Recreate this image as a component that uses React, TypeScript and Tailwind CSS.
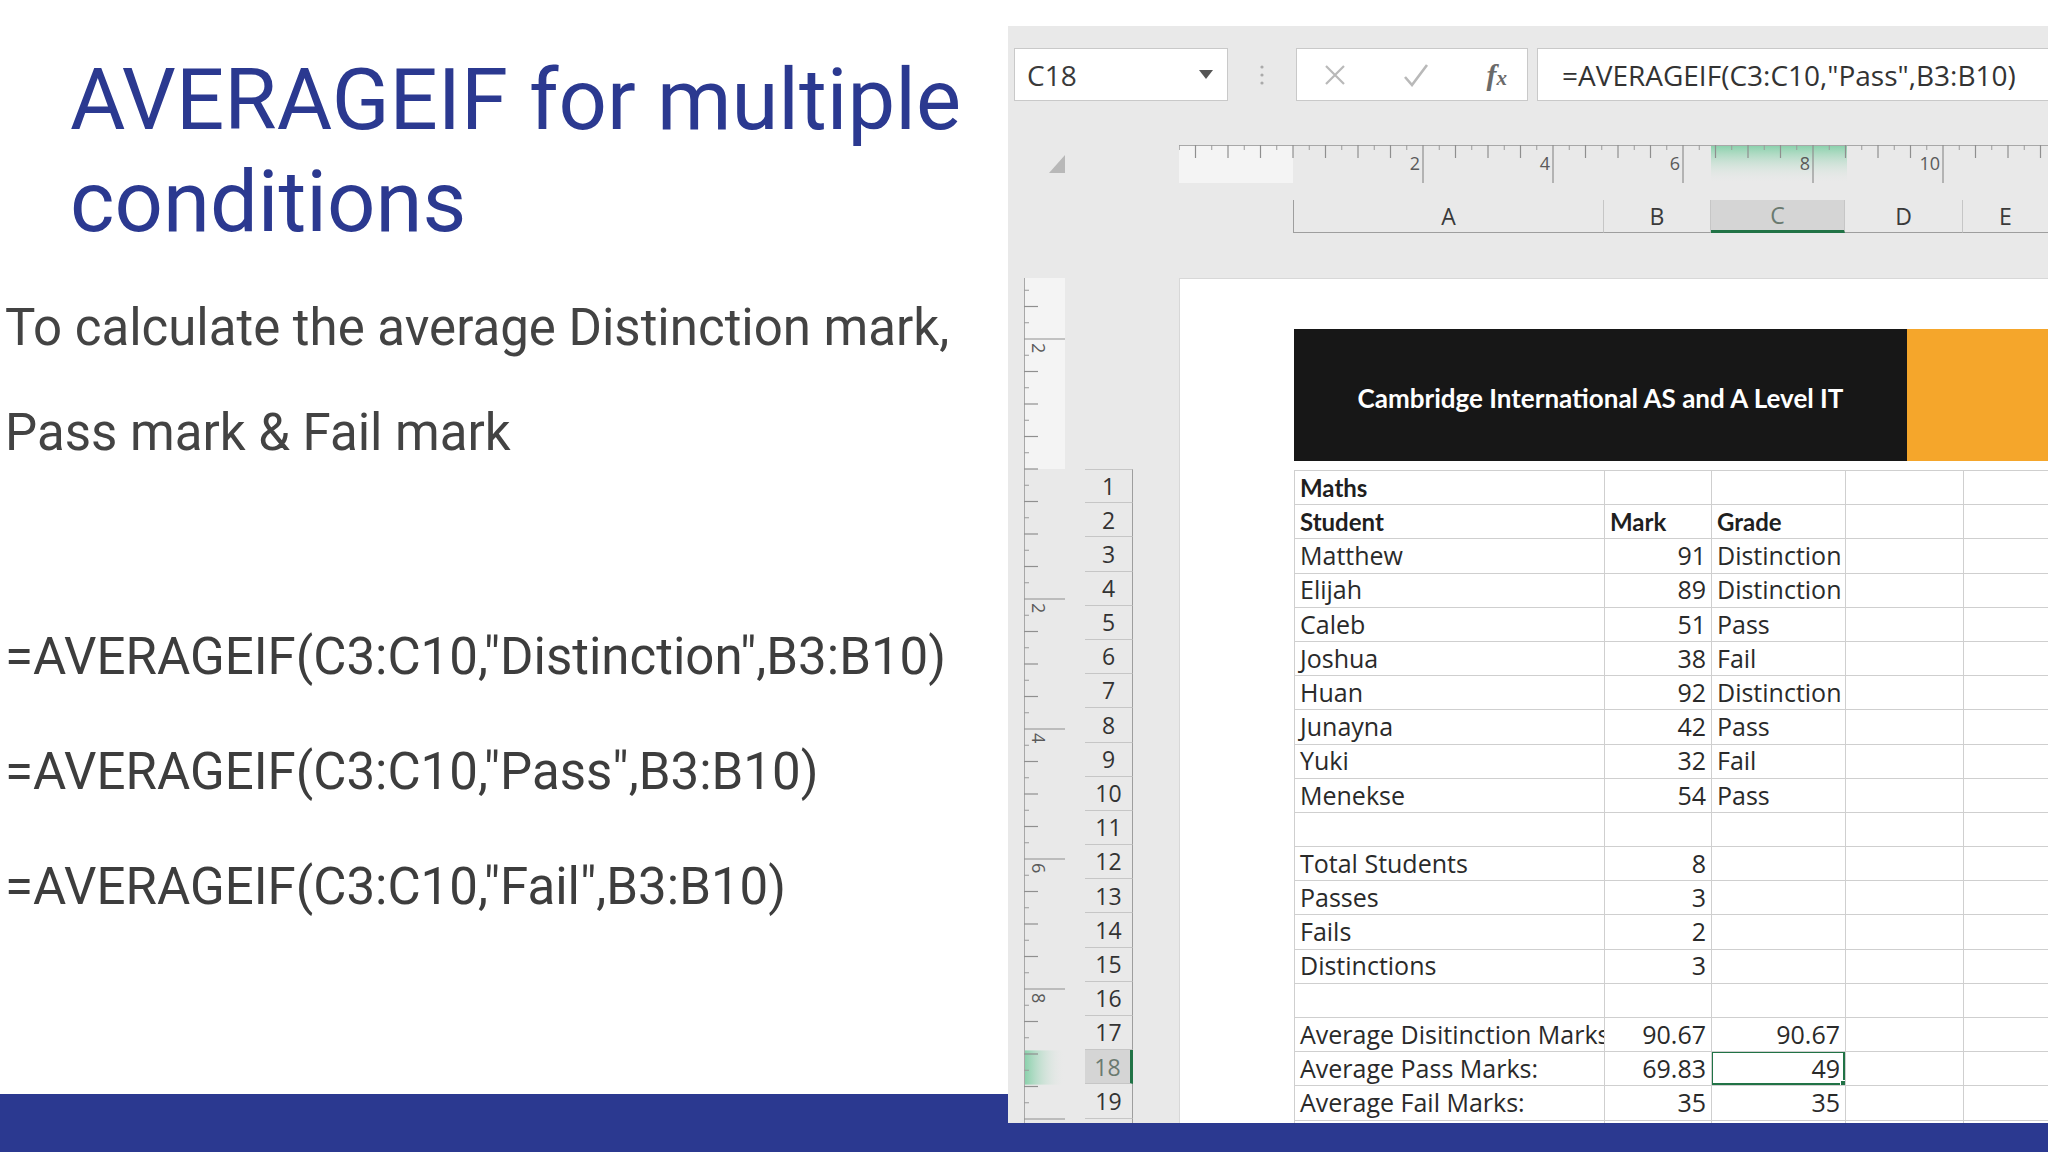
import React from "react";

type Row = { a?: string; b?: string; c?: string; bold?: boolean; selected?: boolean };

const rows: Row[] = [
  { a: "Maths", bold: true },
  { a: "Student", b: "Mark", c: "Grade", bold: true },
  { a: "Matthew", b: "91", c: "Distinction" },
  { a: "Elijah", b: "89", c: "Distinction" },
  { a: "Caleb", b: "51", c: "Pass" },
  { a: "Joshua", b: "38", c: "Fail" },
  { a: "Huan", b: "92", c: "Distinction" },
  { a: "Junayna", b: "42", c: "Pass" },
  { a: "Yuki", b: "32", c: "Fail" },
  { a: "Menekse", b: "54", c: "Pass" },
  {},
  { a: "Total Students", b: "8" },
  { a: "Passes", b: "3" },
  { a: "Fails", b: "2" },
  { a: "Distinctions", b: "3" },
  {},
  { a: "Average Disitinction Marks", b: "90.67", c: "90.67" },
  { a: "Average Pass Marks:", b: "69.83", c: "49", selected: true },
  { a: "Average Fail Marks:", b: "35", c: "35" },
  {},
];

const isNum = (s?: string) => !!s && /^[\d.]+$/.test(s);

function HRuler() {
  const w = 869;
  const x0 = 114;
  const q = 16.25;
  const ticks: React.ReactNode[] = [];
  for (let k = -7; x0 + k * q < w; k++) {
    const x = x0 + k * q;
    if (k % 8 === 0 && k > 0) {
      ticks.push(<line key={k} x1={x} y1={0} x2={x} y2={38} stroke="#8f8f8f" strokeWidth={1.2} />);
      ticks.push(
        <text key={"t" + k} x={x - 3} y={25} fontSize={18} fill="#5a5a5a" textAnchor="end" fontFamily="Open Sans, sans-serif">
          {k / 4}
        </text>
      );
    } else if (k % 2 === 0) {
      ticks.push(<line key={k} x1={x} y1={0} x2={x} y2={13} stroke="#8f8f8f" strokeWidth={1.2} />);
    } else {
      ticks.push(<line key={k} x1={x} y1={0} x2={x} y2={5} stroke="#9a9a9a" strokeWidth={1} />);
    }
  }
  return (
    <svg width={w} height={38} className="block">
      <defs>
        <linearGradient id="hg" x1="0" y1="0" x2="0" y2="1">
          <stop offset="0" stopColor="#86d0a9" />
          <stop offset="1" stopColor="#e9e9e9" stopOpacity="0" />
        </linearGradient>
      </defs>
      <rect x={0} y={0} width={x0} height={38} fill="#f4f4f4" />
      <rect x={532} y={0} width={136} height={38} fill="url(#hg)" />
      <line x1={0} y1={0.5} x2={w} y2={0.5} stroke="#a8a8a8" />
      {ticks}
    </svg>
  );
}

function VRuler() {
  const h = 845;
  const y0 = 191;
  const q = 16.25;
  const ticks: React.ReactNode[] = [];
  for (let k = -11; y0 + k * q < h; k++) {
    const y = y0 + k * q;
    if (k % 8 === 0 && k !== 0) {
      ticks.push(<line key={k} x1={0} y1={y} x2={41} y2={y} stroke="#8f8f8f" strokeWidth={1.2} />);
      if (y + 30 < h) {
        ticks.push(
          <text key={"t" + k} x={0} y={0} transform={`translate(8 ${y + 4}) rotate(90)`} fontSize={18} fill="#5a5a5a" fontFamily="Open Sans, sans-serif">
            {Math.abs(k) / 4}
          </text>
        );
      }
    } else if (k % 2 === 0) {
      ticks.push(<line key={k} x1={0} y1={y} x2={14} y2={y} stroke="#8f8f8f" strokeWidth={1.2} />);
    } else {
      ticks.push(<line key={k} x1={0} y1={y} x2={5} y2={y} stroke="#9a9a9a" strokeWidth={1} />);
    }
  }
  return (
    <svg width={41} height={h} className="block">
      <defs>
        <linearGradient id="vg" x1="0" y1="0" x2="1" y2="0">
          <stop offset="0" stopColor="#86d0a9" />
          <stop offset="1" stopColor="#e9e9e9" stopOpacity="0" />
        </linearGradient>
      </defs>
      <rect x={0} y={0} width={41} height={y0} fill="#f4f4f4" />
      <rect x={0} y={y0 + 17 * 34.2} width={41} height={34.2} fill="url(#vg)" />
      <line x1={0.5} y1={0} x2={0.5} y2={h} stroke="#a8a8a8" />
      {ticks}
    </svg>
  );
}

function Cell({ w, text, bold, right, children }: { w: string; text?: string; bold?: boolean; right?: boolean; children?: React.ReactNode }) {
  return (
    <div
      className={`${w} relative h-full shrink-0 border-r border-b border-[#cfcfcf] flex items-center overflow-hidden whitespace-nowrap px-[5px] ${right ? "justify-end" : "justify-start"}`}
    >
      {text && (
        <span
          className={bold ? "text-[24px] font-bold text-[#1f1f1f]" : "text-[25px] text-[#2a2a2a]"}
          style={{ fontFamily: bold ? "Lato, sans-serif" : '"Open Sans", sans-serif' }}
        >
          {text}
        </span>
      )}
      {children}
    </div>
  );
}

function Excel() {
  return (
    <div
      className="absolute left-[1008px] top-[26px] w-[1040px] h-[1097px] bg-[#e9e9e9] overflow-hidden flex flex-col"
      style={{ fontFamily: '"Open Sans", sans-serif' }}
    >
      {/* formula bar */}
      <div className="flex h-[53px] mt-[22px] pl-[6px] shrink-0">
        <div className="w-[214px] bg-white border border-[#c9c9c9] flex items-center justify-between pl-[12px] pr-[14px]">
          <span className="text-[28px] text-[#3a3a3a]">C18</span>
          <svg width="14" height="9" viewBox="0 0 14 9">
            <polygon points="0,0 14,0 7,9" fill="#555" />
          </svg>
        </div>
        <div className="w-[68px] flex items-center justify-center">
          <svg width="4" height="22" viewBox="0 0 4 22">
            <circle cx="2" cy="3" r="1.6" fill="#aaa" />
            <circle cx="2" cy="11" r="1.6" fill="#aaa" />
            <circle cx="2" cy="19" r="1.6" fill="#aaa" />
          </svg>
        </div>
        <div className="w-[232px] bg-white border border-[#c9c9c9] flex items-center justify-between pl-[27px] pr-[20px]">
          <svg width="22" height="22" viewBox="0 0 22 22">
            <path d="M2 2 L20 20 M20 2 L2 20" stroke="#b9b9b9" strokeWidth="2.2" />
          </svg>
          <svg width="26" height="24" viewBox="0 0 26 24">
            <path d="M2 14 L9 22 L24 2" stroke="#b9b9b9" strokeWidth="2.6" fill="none" />
          </svg>
          <span className="italic font-bold text-[30px] text-[#6a6a6a] leading-none" style={{ fontFamily: '"Liberation Serif", serif' }}>
            f<span className="text-[21px]">x</span>
          </span>
        </div>
        <div className="flex-1 ml-[9px] bg-white border border-r-0 border-[#c9c9c9] flex items-center pl-[24px] text-[28px] text-[#333] whitespace-nowrap">
          =AVERAGEIF(C3:C10,"Pass",B3:B10)
        </div>
      </div>

      {/* horizontal ruler */}
      <div className="flex h-[38px] mt-[44px] shrink-0">
        <div className="w-[171px] pl-[41px] pt-[10px]">
          <svg width="16" height="18" viewBox="0 0 16 18">
            <polygon points="16,0 16,18 0,18" fill="#b8b8b8" />
          </svg>
        </div>
        <HRuler />
      </div>

      {/* column headers */}
      <div className="flex h-[33px] mt-[17px] pl-[285px] shrink-0 text-[23px] text-[#3a3a3a]">
        <div className="w-[311px] border-l border-l-[#9e9e9e] border-r border-r-[#c6c6c6] border-b border-b-[#9e9e9e] flex items-center justify-center">A</div>
        <div className="w-[107px] border-r border-r-[#c6c6c6] border-b border-b-[#9e9e9e] flex items-center justify-center">B</div>
        <div className="w-[134px] bg-[#d5d5d5] border-r border-r-[#c6c6c6] border-b-[3px] border-b-[#217346] flex items-center justify-center text-[#6a7a70]">C</div>
        <div className="w-[118px] border-r border-r-[#c6c6c6] border-b border-b-[#9e9e9e] flex items-center justify-center">D</div>
        <div className="flex-1 border-b border-b-[#9e9e9e] flex items-center justify-center">E</div>
      </div>

      {/* sheet */}
      <div className="flex flex-1 mt-[45px] min-h-0">
        <div className="w-[171px] flex shrink-0">
          <div className="ml-[16px]">
            <VRuler />
          </div>
          <div className="ml-[20px] w-[48px] pt-[191px]">
            {rows.map((_, i) => (
              <div
                key={i}
                className={`h-[34.2px] flex items-center justify-center text-[23px] border-b border-[#c6c6c6] ${i === 0 ? "border-t" : ""} ${
                  i === 17 ? "bg-[#d5d5d5] text-[#6a7a70] border-r-[3px] border-r-[#217346]" : "text-[#333] border-r border-r-[#9e9e9e]"
                }`}
              >
                {i < 19 ? i + 1 : ""}
              </div>
            ))}
          </div>
        </div>

        <div className="flex-1 bg-white relative pt-[50px] pl-[114px] border-t border-l border-[#d8d8d8]">
          <div className="flex h-[132px]">
            <div className="w-[613px] bg-[#171717] flex items-center justify-center pt-[6px]">
              <span className="text-white text-[26px] font-bold" style={{ fontFamily: "Lato, sans-serif" }}>
                Cambridge International AS and A Level IT
              </span>
            </div>
            <div className="flex-1 bg-[#f5a62b]" />
          </div>
          <div className="mt-[9px] border-t border-[#cfcfcf]">
            {rows.map((r, i) => (
              <div key={i} className="flex h-[34.2px]">
                <div className="border-l border-[#cfcfcf] h-full" />
                <Cell w="w-[310px]" text={r.a} bold={r.bold} />
                <Cell w="w-[107px]" text={r.b} bold={r.bold} right={isNum(r.b)} />
                <Cell w="w-[134px]" text={r.c} bold={r.bold} right={isNum(r.c)}>
                  {r.selected && (
                    <div className="absolute -left-[2px] -top-[2px] -right-[1px] -bottom-[1px] border-[3px] border-[#217346]">
                      <div className="absolute -right-[6px] -bottom-[6px] w-[9px] h-[9px] bg-[#217346] border border-white" />
                    </div>
                  )}
                </Cell>
                <Cell w="w-[118px]" />
                <Cell w="w-[90px]" />
              </div>
            ))}
          </div>
          <div className="absolute right-[2px] top-[597px] w-[2px] h-[260px] bg-[#8c1d3c]" />
        </div>
      </div>
    </div>
  );
}

export default function App() {
  return (
    <div className="relative w-[2048px] h-[1152px] bg-white overflow-hidden flex flex-col" style={{ fontFamily: "Roboto, sans-serif" }}>
      <div className="flex-1">
        <h1 className="ml-[70px] mt-[49px] text-[85px] leading-[102px] text-[#2b3990] font-normal whitespace-nowrap">
          AVERAGEIF for multiple
          <br />
          conditions
        </h1>
        <p className="ml-[5px] mt-[22px] text-[51px] leading-[105px] text-[#434343] whitespace-nowrap">
          To calculate the average Distinction mark,
          <br />
          Pass mark &amp; Fail mark
        </p>
        <div className="ml-[5px] mt-[114px] text-[51px] leading-[115px] text-[#3d3d3d] whitespace-nowrap">
          <div>=AVERAGEIF(C3:C10,"Distinction",B3:B10)</div>
          <div>=AVERAGEIF(C3:C10,"Pass",B3:B10)</div>
          <div>=AVERAGEIF(C3:C10,"Fail",B3:B10)</div>
        </div>
      </div>
      <div className="h-[58px] bg-[#2b3990] shrink-0" />
      <Excel />
    </div>
  );
}
